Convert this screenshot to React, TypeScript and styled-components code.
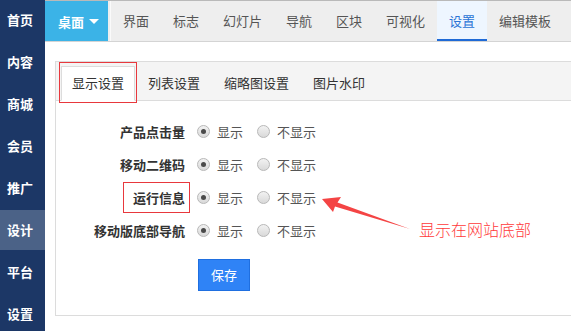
import React from "react";
import styled, { createGlobalStyle, css } from "styled-components";

const Global = createGlobalStyle`
  html, body { margin: 0; padding: 0; background: #fff; }
  body { font-family: "Noto Sans CJK SC", "Noto Sans", sans-serif; }
  * { box-sizing: border-box; }
`;

const FONT = `"Noto Sans CJK SC", "Noto Sans", sans-serif`;

const Page = styled.div`
  position: relative;
  display: flex;
  width: 571px;
  height: 331px;
  overflow: hidden;
  font-family: ${FONT};
`;

const Sidebar = styled.nav`
  flex: 0 0 45px;
  background: #1c3766;
  display: flex;
  flex-direction: column;
  padding-top: 0;
  overflow: hidden;
`;

const SideItem = styled.div<{ $active?: boolean }>`
  flex: 0 0 40px;
  height: 40px;
  margin-bottom: 2px;
  display: flex;
  align-items: center;
  padding: 0 0 2px 7px;
  color: #fff;
  font-size: 13px;
  font-weight: bold;
  background: ${(p) => (p.$active ? "#4b6287" : "transparent")};
`;

const Main = styled.div`
  flex: 1;
  display: flex;
  flex-direction: column;
  min-width: 0;
`;

const TopBar = styled.div`
  height: 42px;
  display: flex;
  background: #eeeeee;
  border-top: 1px solid #b9b9b9;
  border-bottom: 1px solid #d4d4d4;
`;

const DeskButton = styled.div`
  flex: 0 0 63px;
  background: #3bb3e7;
  color: #fff;
  font-size: 13px;
  font-weight: bold;
  display: flex;
  align-items: center;
  padding-left: 13px;
  gap: 5px;
`;

const Caret = styled.span`
  width: 0;
  height: 0;
  border-left: 5px solid transparent;
  border-right: 5px solid transparent;
  border-top: 5px solid #fff;
  margin-top: 1px;
`;

const TopTabs = styled.div`
  display: flex;
  margin-left: 2px;
  border-left: 1px solid #fafafa;
`;

const TopTab = styled.div<{ $active?: boolean }>`
  display: flex;
  align-items: center;
  padding: 0 12px 1px;
  font-size: 13px;
  color: #555;
  white-space: nowrap;
  ${(p) =>
    p.$active &&
    css`
      background: #eef6ff;
      color: #2a74d6;
      border-bottom: 2px solid #1f6ad6;
      padding-top: 2px;
    `}
`;

const Body = styled.div`
  flex: 1;
  padding: 19px 0 0 10px;
`;

const Panel = styled.div`
  width: 530px;
  height: 255px;
  border: 1px solid #dcdcdc;
  display: flex;
  flex-direction: column;
`;

const PanelTabs = styled.div`
  height: 39px;
  display: flex;
  align-items: flex-end;
  background: #f4f4f4;
  border-bottom: 1px solid #dcdcdc;
  padding-left: 5px;
`;

const PanelTab = styled.div<{ $active?: boolean; $marked?: boolean }>`
  position: relative;
  height: 35px;
  margin: 0 2px -1px 0;
  display: flex;
  align-items: center;
  padding: 0 10px 2px;
  border: 1px solid transparent;
  font-size: 13px;
  color: #333;
  white-space: nowrap;
  ${(p) =>
    p.$active &&
    css`
      background: #fff;
      border-color: #dcdcdc;
      border-bottom-color: #fff;
    `}
  ${(p) =>
    p.$marked &&
    css`
      &::after {
        content: "";
        position: absolute;
        left: -3px;
        right: -3px;
        top: -5px;
        bottom: -3px;
        border: 1px solid #e8383d;
        z-index: 2;
      }
    `}
`;

const Form = styled.div`
  padding-top: 14px;
  display: flex;
  flex-direction: column;
`;

const Row = styled.div`
  height: 33px;
  display: flex;
  align-items: center;
`;

const Label = styled.div<{ $marked?: boolean }>`
  position: relative;
  width: 129px;
  text-align: right;
  font-size: 13px;
  font-weight: bold;
  color: #333;
  padding-bottom: 1px;
  ${(p) =>
    p.$marked &&
    css`
      &::after {
        content: "";
        position: absolute;
        right: -5px;
        top: -6px;
        width: 65px;
        height: 29px;
        border: 1px solid #e8383d;
      }
    `}
`;

const Options = styled.div`
  display: flex;
  align-items: center;
  margin-left: 12px;
`;

const Option = styled.div`
  display: flex;
  align-items: center;
  gap: 7px;
  margin-right: 14px;
  font-size: 13px;
  color: #555;
`;

const Radio = styled.span<{ $checked?: boolean }>`
  width: 13px;
  height: 13px;
  border-radius: 50%;
  border: 1px solid #b8b8b8;
  background: linear-gradient(#f2f2f2, #d9d9d9);
  display: flex;
  align-items: center;
  justify-content: center;
  &::after {
    content: "";
    width: 5px;
    height: 5px;
    border-radius: 50%;
    background: ${(p) => (p.$checked ? "#4a4a4a" : "transparent")};
  }
`;

const SaveRow = styled.div`
  padding: 12px 0 0 142px;
`;

const SaveButton = styled.button`
  width: 52px;
  height: 32px;
  background: #2f83f6;
  border: 1px solid #1f6fe0;
  color: #fff;
  font-family: ${FONT};
  font-size: 13px;
  padding: 0 0 2px;
  cursor: pointer;
`;

const Annotation = styled.div`
  position: absolute;
  left: 419px;
  top: 217px;
  color: #ff3a3a;
  font-size: 16px;
  font-weight: 300;
  white-space: nowrap;
  font-family: ${FONT};
`;

const ArrowSvg = styled.svg`
  position: absolute;
  left: 0;
  top: 0;
  pointer-events: none;
`;

const sideItems = ["首页", "内容", "商城", "会员", "推广", "设计", "平台", "设置"];
const topTabs = ["界面", "标志", "幻灯片", "导航", "区块", "可视化", "设置", "编辑模板"];
const panelTabs = ["显示设置", "列表设置", "缩略图设置", "图片水印"];
const rows = [
  { label: "产品点击量" },
  { label: "移动二维码" },
  { label: "运行信息", marked: true },
  { label: "移动版底部导航" },
];

export default function App() {
  return (
    <Page>
      <Global />
      <Sidebar>
        {sideItems.map((s) => (
          <SideItem key={s} $active={s === "设计"}>
            {s}
          </SideItem>
        ))}
      </Sidebar>
      <Main>
        <TopBar>
          <DeskButton>
            桌面
            <Caret />
          </DeskButton>
          <TopTabs>
            {topTabs.map((t) => (
              <TopTab key={t} $active={t === "设置"}>
                {t}
              </TopTab>
            ))}
          </TopTabs>
        </TopBar>
        <Body>
          <Panel>
            <PanelTabs>
              {panelTabs.map((t, i) => (
                <PanelTab key={t} $active={i === 0} $marked={i === 0}>
                  {t}
                </PanelTab>
              ))}
            </PanelTabs>
            <Form>
              {rows.map((r) => (
                <Row key={r.label}>
                  <Label $marked={r.marked}>{r.label}</Label>
                  <Options>
                    <Option>
                      <Radio $checked />
                      显示
                    </Option>
                    <Option>
                      <Radio />
                      不显示
                    </Option>
                  </Options>
                </Row>
              ))}
              <SaveRow>
                <SaveButton>保存</SaveButton>
              </SaveRow>
            </Form>
          </Panel>
        </Body>
      </Main>
      <ArrowSvg width="571" height="331" viewBox="0 0 571 331">
        <polygon
          points="322,199 341,197 337.5,202.5 410,229 335,206.5 333,212"
          fill="#f44444"
        />
      </ArrowSvg>
      <Annotation>显示在网站底部</Annotation>
    </Page>
  );
}
